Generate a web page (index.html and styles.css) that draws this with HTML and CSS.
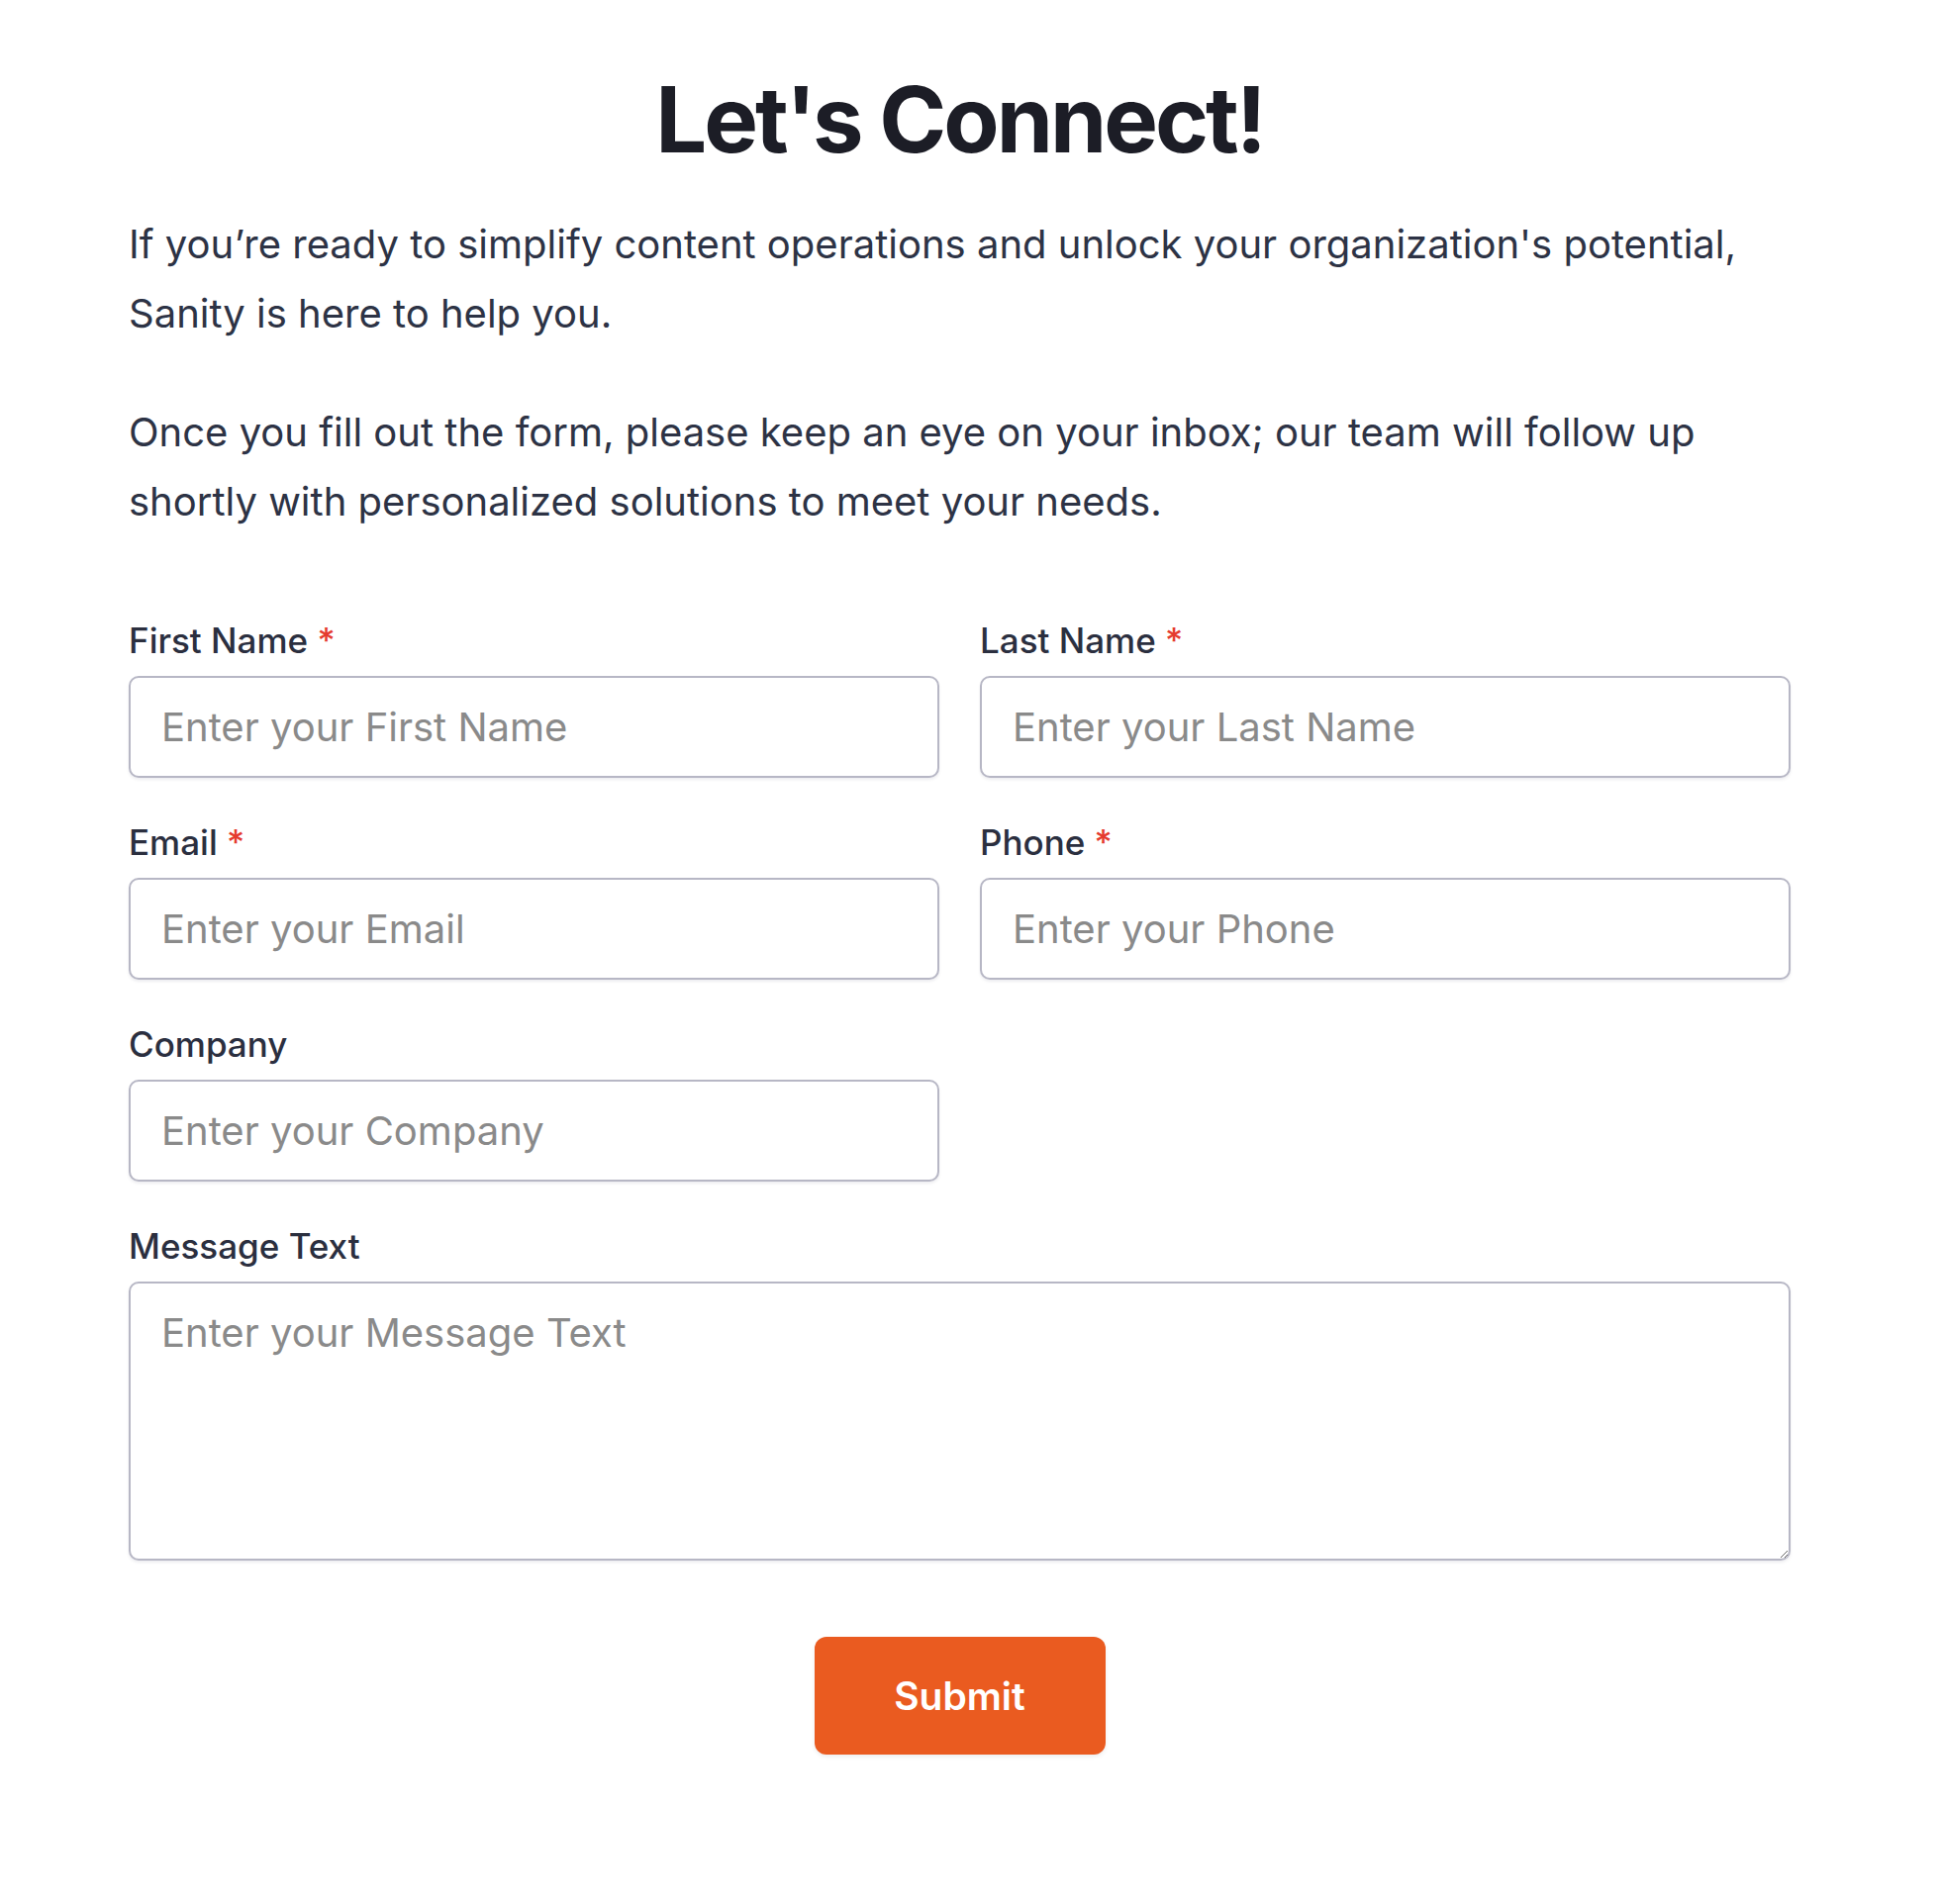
FILE: index.html
```html
<!DOCTYPE html>
<html lang="en">
<head>
<meta charset="utf-8">
<title>Let's Connect!</title>
<link rel="stylesheet" href="styles.css">
</head>
<body>
<main class="page">
  <h1 class="title">Let's Connect!</h1>
  <p class="intro">If you’re ready to simplify content operations and unlock your organization's potential, Sanity is here to help you.</p>
  <p class="intro">Once you fill out the form, please keep an eye on your inbox; our team will follow up shortly with personalized solutions to meet your needs.</p>
  <form class="form">
    <div class="field">
      <label class="label" for="first">First Name <span class="req">*</span></label>
      <input class="input" id="first" type="text" placeholder="Enter your First Name">
    </div>
    <div class="field">
      <label class="label" for="last">Last Name <span class="req">*</span></label>
      <input class="input" id="last" type="text" placeholder="Enter your Last Name">
    </div>
    <div class="field">
      <label class="label" for="email">Email <span class="req">*</span></label>
      <input class="input" id="email" type="email" placeholder="Enter your Email">
    </div>
    <div class="field">
      <label class="label" for="phone">Phone <span class="req">*</span></label>
      <input class="input" id="phone" type="tel" placeholder="Enter your Phone">
    </div>
    <div class="field">
      <label class="label" for="company">Company</label>
      <input class="input" id="company" type="text" placeholder="Enter your Company">
    </div>
    <div class="field field-wide">
      <label class="label" for="message">Message Text</label>
      <textarea class="input textarea" id="message" placeholder="Enter your Message Text"></textarea>
    </div>
    <div class="actions">
      <button class="submit" type="submit">Submit</button>
    </div>
  </form>
</main>
</body>
</html>
```
FILE: styles.css
```css
* { box-sizing: border-box; }
html, body { margin: 0; padding: 0; background: #ffffff; }
body { font-family: Inter, "Noto Sans", sans-serif; color: #2d3345; }

.page {
  width: 1679px;
  margin-left: 130px;
  padding-top: 66px;
  padding-bottom: 120px;
}

.title {
  margin: 0 0 36px;
  text-align: center;
  font-size: 92px;
  line-height: 110px;
  font-weight: 700;
  letter-spacing: -0.033em;
  color: #1c1d26;
}

.intro {
  margin: 0 0 50px;
  font-size: 40px;
  line-height: 70px;
  color: #2d3345;
}

.form {
  margin-top: 83px;
  display: grid;
  grid-template-columns: 1fr 1fr;
  column-gap: 41px;
  row-gap: 43px;
}

.field { display: flex; flex-direction: column; gap: 14px; }
.field-wide { grid-column: 1 / 3; }

.label {
  font-size: 35px;
  line-height: 44px;
  font-weight: 500;
  color: #2b2f3f;
}
.req { color: #e53b2f; }

.input {
  height: 103px;
  border: 2px solid #b7b7c5;
  border-radius: 10px;
  padding: 0 31px;
  font-family: inherit;
  font-size: 40px;
  color: #2d3345;
  background: #fff;
  box-shadow: 0 2px 3px rgba(30, 30, 60, 0.08);
  outline: none;
}
.input::placeholder { color: #8a8a8a; }

.textarea {
  height: 282px;
  padding: 27px 31px;
  line-height: 46px;
  resize: vertical;
}

.actions {
  grid-column: 1 / 3;
  display: flex;
  justify-content: center;
  margin-top: 34px;
}

.submit {
  width: 294px;
  height: 119px;
  border: none;
  border-radius: 12px;
  background: #ea5b20;
  color: #ffffff;
  font-family: inherit;
  font-size: 39px;
  font-weight: 600;
  box-shadow: 0 2px 4px rgba(0, 0, 0, 0.08);
  cursor: pointer;
}
```
